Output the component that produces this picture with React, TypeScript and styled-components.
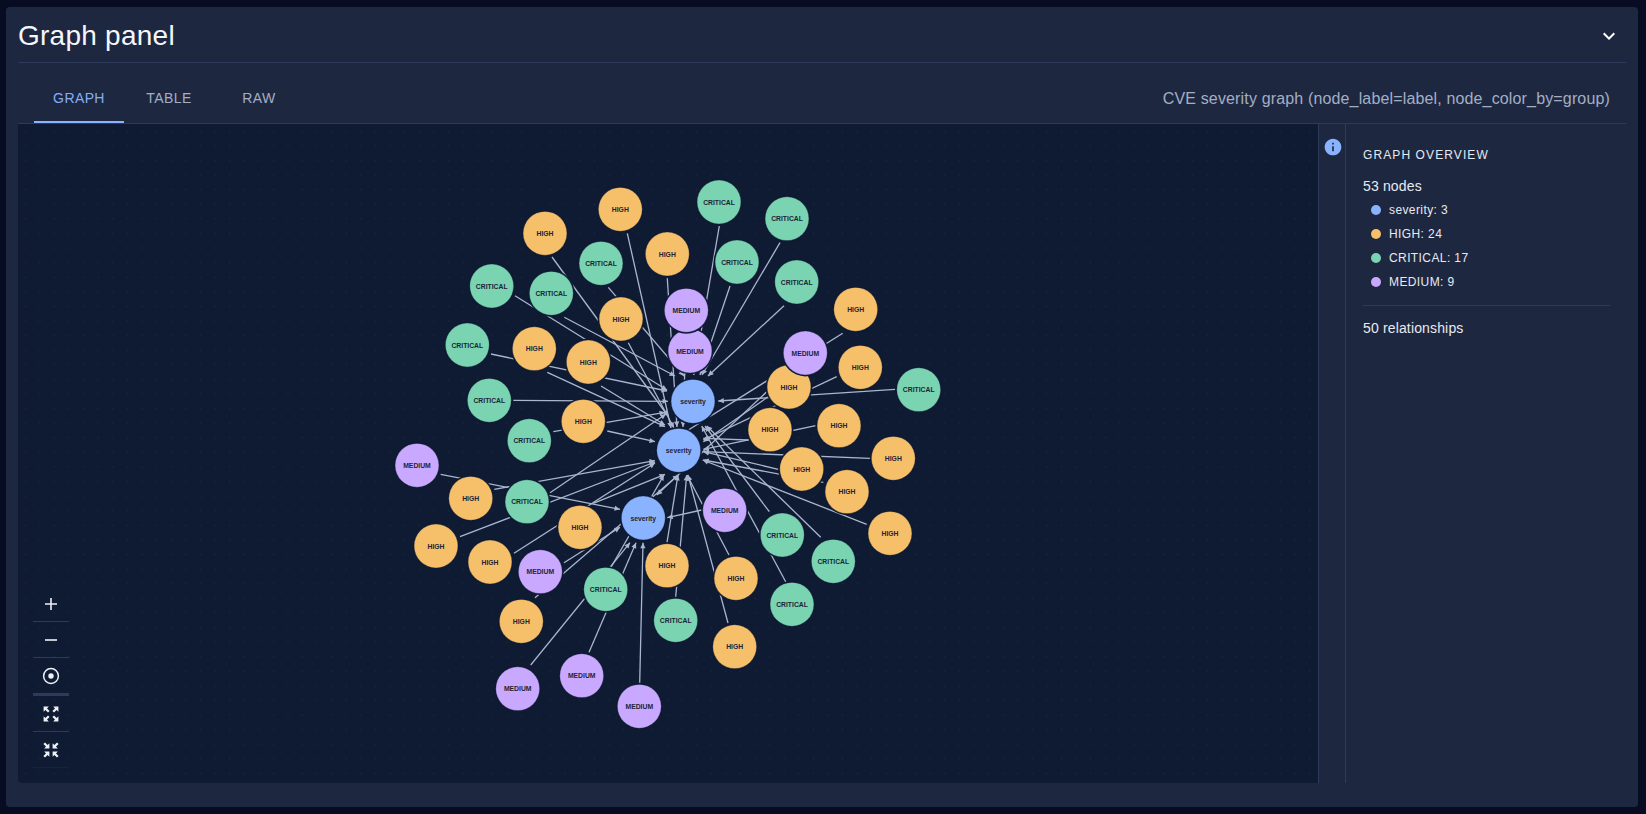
import { useState } from 'react';
import styled, { createGlobalStyle } from 'styled-components';

type Group = 'severity' | 'HIGH' | 'CRITICAL' | 'MEDIUM';

const GROUP_COLORS: Record<Group, string> = {
  severity: '#8ab3ff',
  HIGH: '#f6bf6a',
  CRITICAL: '#7ad4b2',
  MEDIUM: '#c9a8ff',
};

const LEGEND: { group: Group; count: number }[] = [
  { group: 'severity', count: 3 },
  { group: 'HIGH', count: 24 },
  { group: 'CRITICAL', count: 17 },
  { group: 'MEDIUM', count: 9 },
];

// node centres, in page pixels; order is paint order
const NODES: [Group, number, number][] = [
  ['HIGH', 620.3, 209.3], ['HIGH', 545, 233.3], ['HIGH', 667.3, 254], ['CRITICAL', 601, 263.3],
  ['CRITICAL', 491.7, 286], ['CRITICAL', 551.3, 293.3], ['HIGH', 621, 319], ['HIGH', 534.3, 348.7],
  ['CRITICAL', 467.3, 345], ['HIGH', 588.3, 362], ['CRITICAL', 489.3, 400.3], ['HIGH', 583.3, 421.3],
  ['CRITICAL', 529.3, 440.7], ['CRITICAL', 719, 202], ['CRITICAL', 787, 218.7], ['CRITICAL', 737, 262],
  ['CRITICAL', 796.7, 282], ['HIGH', 855.7, 309.3], ['MEDIUM', 690, 351], ['MEDIUM', 686.3, 310.3],
  ['HIGH', 789, 387], ['MEDIUM', 805.3, 353], ['HIGH', 860.3, 367.3], ['CRITICAL', 918.7, 389.7],
  ['severity', 693, 401.3], ['HIGH', 770, 429.7], ['HIGH', 839, 425.7], ['MEDIUM', 417, 465.3],
  ['HIGH', 470.7, 498.3], ['CRITICAL', 527, 501.7], ['severity', 643.3, 518], ['HIGH', 580, 527.3],
  ['HIGH', 436, 546], ['HIGH', 490, 562], ['MEDIUM', 540.3, 571.7], ['CRITICAL', 605.7, 589.3],
  ['HIGH', 667, 565.7], ['HIGH', 521.3, 621.3], ['CRITICAL', 675.7, 620.3], ['MEDIUM', 517.7, 688.7],
  ['MEDIUM', 581.7, 675.7], ['MEDIUM', 639.3, 706.3], ['severity', 678.7, 450.3], ['HIGH', 801.7, 469],
  ['HIGH', 893.3, 458.3], ['HIGH', 847, 491.7], ['MEDIUM', 724.7, 510.3], ['CRITICAL', 782.3, 535],
  ['CRITICAL', 833.3, 561.3], ['HIGH', 890, 533.3], ['HIGH', 736, 578.3], ['CRITICAL', 792, 604.3],
  ['HIGH', 734.7, 646.7],
];

// edges are taken as drawn: the layout was still settling, so they don't all aim at node centres
const EDGES: [number, number, number, number][] = [
  [552, 257, 668, 416], [627.3, 233.3, 671, 428], [667.3, 278.3, 677, 427], [608.3, 287.3, 684, 376],
  [564.3, 317.3, 675, 376], [515, 295.7, 667, 390], [628.3, 342.7, 674, 428], [491, 354, 667, 391],
  [547.3, 372.3, 665, 426.7], [601, 386, 665, 425], [513.3, 400.3, 668, 401.3], [607.3, 431, 655, 441.7],
  [553.3, 431.7, 665, 412.3], [550, 492.7, 666, 414], [494.3, 489.3, 655, 460.7], [440.7, 474.3, 620, 509.3],
  [460, 536.7, 655, 462], [514, 553.3, 655, 463], [593.3, 503.3, 665, 474.3], [564, 562.7, 620, 527.3],
  [535, 597.7, 678.3, 475], [530.7, 665, 630, 542.7], [589, 652.3, 636, 542.7], [639.7, 682.7, 643, 542.7],
  [610.7, 567.7, 664, 475], [667, 542.3, 678, 475], [675.7, 596.7, 686.7, 475], [729, 555, 687, 475],
  [728, 623, 688, 475], [701.7, 510, 667.3, 517.7], [769.3, 511.7, 705, 426], [820.7, 537.3, 706.7, 426],
  [785.7, 581.7, 701.7, 426], [866.7, 524.3, 702.7, 460], [823.3, 482.3, 703.3, 460], [778.3, 469.3, 703.3, 451.7],
  [870, 458.3, 703.3, 451.7], [748.3, 440, 703.3, 438.3], [815.7, 425.7, 703.3, 449.3], [768.3, 396.7, 703.3, 441.7],
  [895, 389.3, 718.3, 401], [842.7, 333.3, 682, 434], [836.7, 376.7, 703.3, 440], [790, 370, 656.7, 495],
  [780, 242.7, 702, 375], [784, 305.7, 708, 376], [730, 286, 700, 375], [719.3, 226, 693.7, 375],
  [690, 351, 684, 376], [686, 332, 683, 427],
];

const TABS = ['Graph', 'Table', 'Raw'];

const GlobalStyle = createGlobalStyle`
  html, body {
    margin: 0;
    height: 100%;
    background: #070c22;
    font-family: 'Liberation Sans', Arial, sans-serif;
  }
  #root {
    height: 100%;
  }
`;

const Page = styled.div`
  box-sizing: border-box;
  height: 100vh;
  padding: 7px 8px 7px 6px;
`;

const Card = styled.section`
  box-sizing: border-box;
  height: 100%;
  display: flex;
  flex-direction: column;
  padding: 0 12px 24px;
  background: #1e2740;
  border-radius: 4px;
`;

const CardHeader = styled.header`
  box-sizing: border-box;
  height: 56px;
  flex: none;
  display: flex;
  align-items: center;
  justify-content: space-between;
  padding-top: 2px;
  border-bottom: 1px solid #2d3a5a;
`;

const Title = styled.h2`
  margin: 0;
  font-size: 28px;
  font-weight: 400;
  letter-spacing: 0.25px;
  color: #f4f6fb;
`;

const Collapse = styled.button`
  width: 24px;
  height: 24px;
  margin-right: 5px;
  padding: 0;
  border: 0;
  background: none;
  color: #fff;
  cursor: pointer;
`;

const Content = styled.div`
  flex: 1;
  min-height: 0;
  display: flex;
  flex-direction: column;
`;

const TabBar = styled.div`
  box-sizing: border-box;
  height: 61px;
  flex: none;
  display: flex;
  align-items: stretch;
  justify-content: space-between;
  padding: 12px 16px 0;
  border-bottom: 1px solid #2d3a5a;
`;

const TabList = styled.div`
  display: flex;
`;

const Tab = styled.button<{ $active: boolean }>`
  min-width: 90px;
  padding: 0 16px;
  background: none;
  border: 0;
  border-bottom: 2px solid ${props => (props.$active ? '#8ab3ff' : 'transparent')};
  color: ${props => (props.$active ? '#86aef5' : '#a3afc5')};
  font-family: inherit;
  font-size: 14px;
  letter-spacing: 0.4px;
  text-transform: uppercase;
  cursor: pointer;
`;

const Caption = styled.div`
  align-self: center;
  font-size: 16px;
  letter-spacing: 0.15px;
  color: #a3afc5;
`;

const Body = styled.div`
  flex: 1;
  min-height: 0;
  display: flex;
`;

const Canvas = styled.div`
  position: relative;
  flex: 1;
  min-width: 0;
  background-color: #0f1a33;
  background-image: radial-gradient(circle, rgba(255, 255, 255, 0.05) 0.7px, transparent 1.1px);
  background-size: 14.6px 14.6px;
  border-bottom-left-radius: 4px;
`;

const GraphSvg = styled.svg`
  display: block;
  width: 100%;
  height: 100%;
`;

const EdgeLine = styled.line`
  stroke: #aab6cf;
  stroke-width: 1.3;
`;

const ArrowHead = styled.path`
  fill: #aab6cf;
`;

const NodeHalo = styled.circle`
  fill: #0f1a33;
`;

const NodeDisc = styled.circle<{ $group: Group }>`
  fill: ${props => GROUP_COLORS[props.$group]};
  stroke: rgba(15, 26, 51, 0.35);
  stroke-width: 0.8;
`;

const NodeLabel = styled.text`
  fill: #1c2436;
  font-size: 6.8px;
  font-weight: 700;
  text-anchor: middle;
  dominant-baseline: central;
`;

const ZoomControls = styled.div`
  position: absolute;
  left: 15px;
  bottom: 15px;
  width: 36px;
  display: flex;
  flex-direction: column;
`;

const ZoomButton = styled.button<{ $thick?: boolean }>`
  box-sizing: border-box;
  height: ${props => (props.$thick ? '38px' : '36px')};
  display: flex;
  align-items: center;
  justify-content: center;
  padding: 0;
  background: none;
  border: 0;
  border-bottom: ${props => (props.$thick ? '3px' : '1px')} solid #2d3a5a;
  color: #eef1f7;
  cursor: pointer;

  &:last-child {
    border-bottom-color: #172240;
  }
`;

const Rail = styled.div`
  width: 28px;
  flex: none;
  display: flex;
  justify-content: center;
  padding: 13px 0 0 2px;
  box-sizing: border-box;
  border-left: 1px solid #2d3a5a;
  border-right: 1px solid #2d3a5a;
  color: #8ab3ff;
`;

const Overview = styled.aside`
  width: 280px;
  flex: none;
  box-sizing: border-box;
  padding: 24px 16px 0 17px;
  color: #e6eaf2;
`;

const OverviewTitle = styled.div`
  font-size: 12px;
  letter-spacing: 1.1px;
  line-height: 14px;
  margin-bottom: 16px;
`;

const CountLine = styled.div`
  font-size: 14px;
  letter-spacing: 0.15px;
  line-height: 16px;
`;

const LegendList = styled.ul`
  list-style: none;
  margin: 4px 0 0;
  padding: 0 0 0 8px;
`;

const LegendItem = styled.li`
  height: 24px;
  display: flex;
  align-items: center;
  gap: 8px;
  font-size: 12px;
  letter-spacing: 0.4px;
`;

const LegendDot = styled.span<{ $group: Group }>`
  width: 10px;
  height: 10px;
  border-radius: 50%;
  background: ${props => GROUP_COLORS[props.$group]};
`;

const Rule = styled.hr`
  margin: 11px 0 14px;
  border: 0;
  border-top: 1px solid #2d3a5a;
`;

const arrowPath = (x1: number, y1: number, x2: number, y2: number) => {
  const len = Math.hypot(x2 - x1, y2 - y1);
  const ux = (x2 - x1) / len;
  const uy = (y2 - y1) / len;
  const bx = x2 - ux * 5.5;
  const by = y2 - uy * 5.5;
  return `M${x2} ${y2}L${bx - uy * 2.6} ${by + ux * 2.6}L${bx + uy * 2.6} ${by - ux * 2.6}Z`;
};

const CornerArrows = ({ inward }: { inward?: boolean }) => (
  <svg width="16" height="16" viewBox="0 0 16 16" fill="currentColor">
    {[0, 90, 180, 270].map(angle => (
      <g key={angle} transform={`rotate(${angle} 8 8)`}>
        {inward ? (
          <path d="M6.4 6.4V1.2L4.6 3 2 .4.4 2 3 4.6 1.2 6.4z" />
        ) : (
          <path d="M.6.6v5.2l1.8-1.8L5 6.6 6.6 5 4 2.4 5.8.6z" />
        )}
      </g>
    ))}
  </svg>
);

const App = () => {
  const [activeTab, setActiveTab] = useState('Graph');
  const [collapsed, setCollapsed] = useState(false);

  return (
    <Page>
      <GlobalStyle />
      <Card>
        <CardHeader>
          <Title>Graph panel</Title>
          <Collapse onClick={() => setCollapsed(!collapsed)} aria-label="Collapse">
            <svg width="24" height="24" viewBox="0 0 24 24" fill="currentColor">
              <path d="M7.41 8.59 12 13.17l4.59-4.58L18 10l-6 6-6-6z" />
            </svg>
          </Collapse>
        </CardHeader>
        <Content>
          <TabBar>
            <TabList>
              {TABS.map(tab => (
                <Tab key={tab} $active={tab === activeTab} onClick={() => setActiveTab(tab)}>
                  {tab}
                </Tab>
              ))}
            </TabList>
            <Caption>CVE severity graph (node_label=label, node_color_by=group)</Caption>
          </TabBar>
          <Body>
            <Canvas>
              <GraphSvg viewBox="18 124 1298 659" preserveAspectRatio="xMinYMin meet">
                {EDGES.map(([x1, y1, x2, y2], i) => (
                  <g key={i}>
                    <EdgeLine x1={x1} y1={y1} x2={x2} y2={y2} />
                    <ArrowHead d={arrowPath(x1, y1, x2, y2)} />
                  </g>
                ))}
                {NODES.map(([group, x, y], i) => (
                  <g key={i}>
                    <NodeHalo cx={x} cy={y} r={23.4} />
                    <NodeDisc $group={group} cx={x} cy={y} r={21.9} />
                    <NodeLabel x={x} y={y}>{group}</NodeLabel>
                  </g>
                ))}
              </GraphSvg>
              <ZoomControls>
                <ZoomButton aria-label="Zoom in">
                  <svg width="14" height="14" viewBox="0 0 14 14" fill="currentColor">
                    <path d="M6.2 1h1.6v5.2H13v1.6H7.8V13H6.2V7.8H1V6.2h5.2z" />
                  </svg>
                </ZoomButton>
                <ZoomButton aria-label="Zoom out">
                  <svg width="14" height="14" viewBox="0 0 14 14" fill="currentColor">
                    <path d="M1 6.2h12v1.6H1z" />
                  </svg>
                </ZoomButton>
                <ZoomButton $thick aria-label="Center">
                  <svg width="18" height="18" viewBox="0 0 18 18">
                    <circle cx="9" cy="9" r="7.4" fill="none" stroke="currentColor" strokeWidth="1.5" />
                    <circle cx="9" cy="9" r="2.7" fill="currentColor" />
                  </svg>
                </ZoomButton>
                <ZoomButton aria-label="Fit">
                  <CornerArrows />
                </ZoomButton>
                <ZoomButton aria-label="Shrink">
                  <CornerArrows inward />
                </ZoomButton>
              </ZoomControls>
            </Canvas>
            <Rail>
              <svg width="20" height="20" viewBox="0 0 24 24" fill="currentColor">
                <path d="M12 2C6.48 2 2 6.48 2 12s4.48 10 10 10 10-4.48 10-10S17.52 2 12 2zm1 15h-2v-6h2v6zm0-8h-2V7h2v2z" />
              </svg>
            </Rail>
            <Overview>
              <OverviewTitle>GRAPH OVERVIEW</OverviewTitle>
              <CountLine>53 nodes</CountLine>
              <LegendList>
                {LEGEND.map(({ group, count }) => (
                  <LegendItem key={group}>
                    <LegendDot $group={group} />
                    {group}: {count}
                  </LegendItem>
                ))}
              </LegendList>
              <Rule />
              <CountLine>50 relationships</CountLine>
            </Overview>
          </Body>
        </Content>
      </Card>
    </Page>
  );
};

export default App;
